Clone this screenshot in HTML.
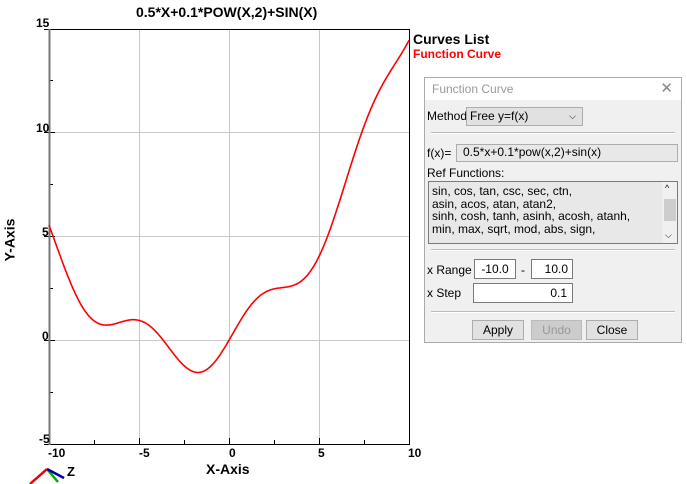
<!DOCTYPE html>
<html><head><meta charset="utf-8"><style>
body{margin:0;width:687px;height:484px;background:#fff;overflow:hidden;position:relative;font-family:"Liberation Sans",sans-serif}
.t{position:absolute;white-space:nowrap}
.dlg{position:absolute;left:424px;top:77px;width:258px;height:266px;background:#f0f0f0;border:1px solid #aaa;box-sizing:border-box;font-family:"Liberation Sans",sans-serif;font-size:12px;color:#000}
.ttl{height:22px;background:#fff;color:#999;font-size:12px;line-height:22px;padding-left:7px;position:relative}
.box{position:absolute;border:1px solid #7a7a7a;background:#fff;box-sizing:border-box;font-size:12px;line-height:15px}
.sep{position:absolute;left:3px;right:3px;height:0;border-top:1px solid #bbb;border-bottom:1px solid #fff}
.btn{position:absolute;top:242px;height:20px;border:1px solid #adadad;background:#e1e1e1;box-sizing:border-box;text-align:center;line-height:18px;font-size:12px}
</style></head><body>
<svg width="687" height="484" style="position:absolute;left:0;top:0">
<g stroke="#c8c8c8" stroke-width="1">
<line x1="139.5" y1="29" x2="139.5" y2="444"/><line x1="229.5" y1="29" x2="229.5" y2="444"/><line x1="319.5" y1="29" x2="319.5" y2="444"/>
<line x1="49" y1="132.5" x2="409" y2="132.5"/><line x1="49" y1="236.5" x2="409" y2="236.5"/><line x1="49" y1="340.5" x2="409" y2="340.5"/>
</g>
<g stroke="#000" stroke-width="1">
<line x1="49" y1="29.5" x2="409" y2="29.5"/><line x1="409.5" y1="29" x2="409.5" y2="444"/>
<line x1="49" y1="444.5" x2="410" y2="444.5"/>
<line x1="94.5" y1="440" x2="94.5" y2="444"/><line x1="184.5" y1="440" x2="184.5" y2="444"/><line x1="274.5" y1="440" x2="274.5" y2="444"/><line x1="364.5" y1="440" x2="364.5" y2="444"/>
<line x1="139.5" y1="438" x2="139.5" y2="444"/><line x1="229.5" y1="438" x2="229.5" y2="444"/><line x1="319.5" y1="438" x2="319.5" y2="444"/>
<line x1="49" y1="80.5" x2="53" y2="80.5"/><line x1="49" y1="184.5" x2="53" y2="184.5"/><line x1="49" y1="288.5" x2="53" y2="288.5"/><line x1="49" y1="392.5" x2="53" y2="392.5"/>
<line x1="44" y1="132.5" x2="55" y2="132.5"/><line x1="44" y1="236.5" x2="55" y2="236.5"/><line x1="44" y1="340.5" x2="55" y2="340.5"/><line x1="44" y1="444.5" x2="55" y2="444.5"/><line x1="44" y1="29.5" x2="55" y2="29.5"/>
</g>
<line x1="49.5" y1="29" x2="49.5" y2="445" stroke="#777" stroke-width="2"/>
<path id="cv" fill="none" stroke="#f00" stroke-width="1.6"/>
<g stroke-width="2.5" fill="none"><path d="M30 484 L47 469" stroke="#e00"/><path d="M47 469 L58 482" stroke="#0a0"/><path d="M47 469 L64 478" stroke="#00a"/></g>
</svg>
<script>
var d="";for(var i=0;i<=400;i++){var x=-10+i*0.05;var y=0.5*x+0.1*x*x+Math.sin(x);var px=49+(x+10)*18,py=29+(15-y)*20.75;d+=(i?"L":"M")+px.toFixed(1)+" "+py.toFixed(1);}document.getElementById("cv").setAttribute("d",d);
</script>
<div class="t" style="left:136px;top:4px;font-size:14px;font-weight:bold">0.5*X+0.1*POW(X,2)+SIN(X)</div>
<div class="t" style="left:36px;top:16px;font-size:12px;font-weight:bold">15</div>
<div class="t" style="left:36px;top:121px;font-size:12px;font-weight:bold">10</div>
<div class="t" style="left:42px;top:225px;font-size:12px;font-weight:bold">5</div>
<div class="t" style="left:42px;top:329px;font-size:12px;font-weight:bold">0</div>
<div class="t" style="left:39px;top:432px;font-size:12px;font-weight:bold">-5</div>
<div class="t" style="left:48px;top:446px;font-size:12px;font-weight:bold">-10</div>
<div class="t" style="left:139px;top:446px;font-size:12px;font-weight:bold">-5</div>
<div class="t" style="left:229px;top:446px;font-size:12px;font-weight:bold">0</div>
<div class="t" style="left:318px;top:446px;font-size:12px;font-weight:bold">5</div>
<div class="t" style="left:408px;top:446px;font-size:12px;font-weight:bold">10</div>
<div class="t" style="left:206px;top:461px;font-size:14px;font-weight:bold">X-Axis</div>
<div class="t" style="left:-12px;top:232px;font-size:14px;font-weight:bold;transform:rotate(-90deg)">Y-Axis</div>
<div class="t" style="left:67px;top:464px;font-size:13px;font-weight:bold">Z</div>
<div class="t" style="left:413px;top:31px;font-size:14px;font-weight:bold">Curves List</div>
<div class="t" style="left:413px;top:47px;font-size:12px;font-weight:bold;color:#f00">Function Curve</div>
<div class="dlg">
<div class="ttl">Function Curve<span style="position:absolute;right:8px;top:0;color:#888;font-size:15px">✕</span></div>
<div class="t" style="left:2px;top:31px">Method</div>
<div class="box" style="left:41px;top:29px;width:117px;height:19px;background:#e1e1e1;border-color:#adadad;padding-left:3px;line-height:17px">Free y=f(x)<span style="position:absolute;right:6px;top:0;font-size:9px">⌵</span></div>
<div class="sep" style="top:54px;left:6px;right:6px"></div>
<div class="t" style="left:2px;top:68px">f(x)=</div>
<div class="box" style="left:31px;top:66px;width:222px;height:18px;background:#e8e8e8;border-color:#adadad;padding-left:6px">0.5*x+0.1*pow(x,2)+sin(x)</div>
<div class="t" style="left:2px;top:88px">Ref Functions:</div>
<div class="box" style="left:3px;top:103px;width:250px;height:63px;background:#e8e8e8;padding:3px 0 0 3px;line-height:12.5px">sin, cos, tan, csc, sec, ctn,<br>asin, acos, atan, atan2,<br>sinh, cosh, tanh, asinh, acosh, atanh,<br>min, max, sqrt, mod, abs, sign,
<div style="position:absolute;right:0;top:0;width:15px;height:61px;background:#f0f0f0"><div style="position:absolute;left:2px;top:17px;width:12px;height:22px;background:#cdcdcd"></div><span style="position:absolute;left:3px;top:0;font-size:9px">^</span><span style="position:absolute;left:3px;top:47px;font-size:9px">⌵</span></div></div>
<div class="sep" style="top:171px;left:6px;right:6px"></div>
<div class="t" style="left:2px;top:185px">x Range</div>
<div class="box" style="left:49px;top:181px;width:42px;height:20px;text-align:center;line-height:18px">-10.0</div>
<div class="t" style="left:96px;top:185px">-</div>
<div class="box" style="left:106px;top:181px;width:42px;height:20px;text-align:right;padding-right:4px;line-height:18px">10.0</div>
<div class="t" style="left:2px;top:208px">x Step</div>
<div class="box" style="left:48px;top:205px;width:100px;height:20px;text-align:right;padding-right:5px;line-height:18px">0.1</div>
<div class="sep" style="top:233px;left:6px;right:6px"></div>
<div class="btn" style="left:47px;width:52px">Apply</div>
<div class="btn" style="left:106px;width:51px;color:#999;background:#ccc;border-color:#bbb">Undo</div>
<div class="btn" style="left:161px;width:52px">Close</div>
</div>
</body></html>
